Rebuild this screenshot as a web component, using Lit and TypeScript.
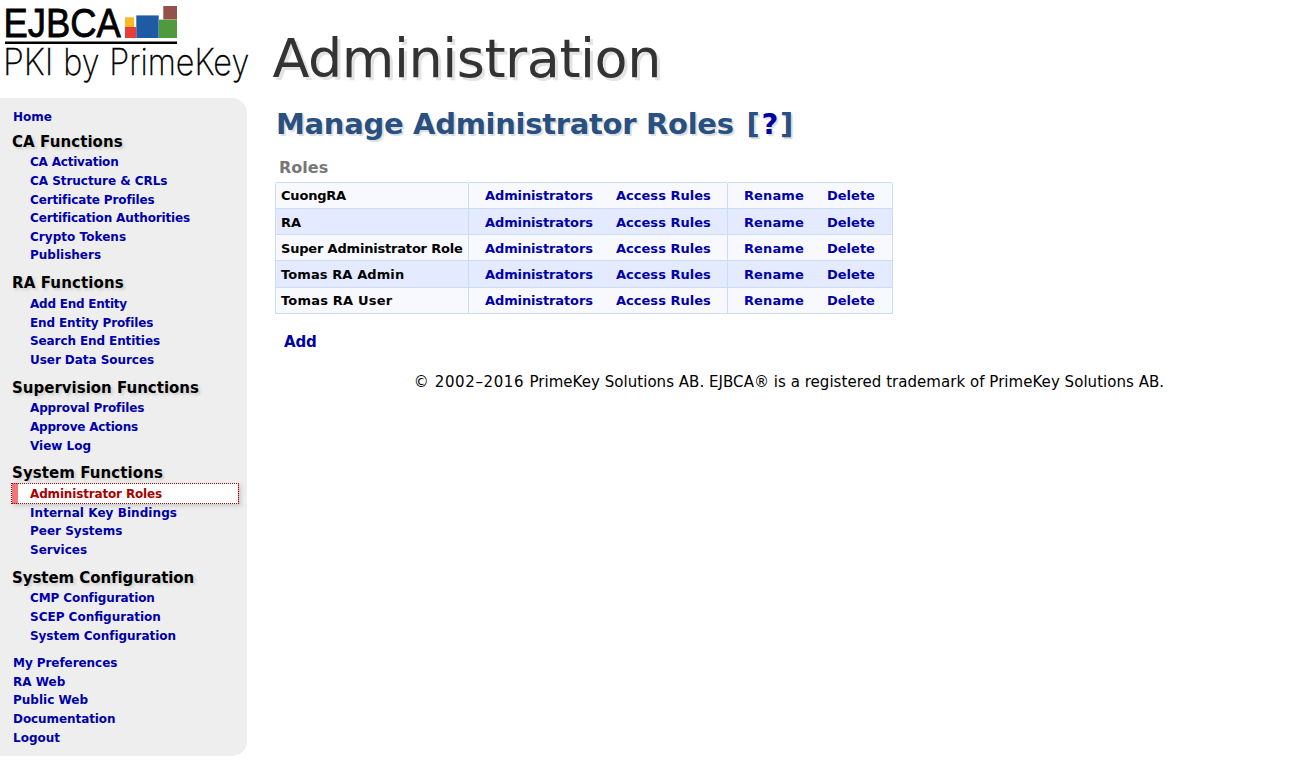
import { LitElement, html, css } from "lit";
import { customElement } from "lit/decorators.js";
import { classMap } from "lit/directives/class-map.js";
import { styleMap } from "lit/directives/style-map.js";

/** A label and its letter tracking in pixels. */
type Label = [text: string, tracking?: number];
interface Section { title: Label; items: Label[]; }

const label = ([text, tracking = 0]: Label) =>
  html`<span style=${styleMap({ letterSpacing: `${tracking}px` })}>${text}</span>`;

const SECTIONS: Section[] = [
  {
    title: ["CA Functions", 0.08],
    items: [["CA Activation", -0.2], ["CA Structure & CRLs", -0.04], ["Certificate Profiles", -0.12], ["Certification Authorities", -0.14], ["Crypto Tokens", 0.04], ["Publishers"]],
  },
  {
    title: ["RA Functions", 0.12],
    items: [["Add End Entity", -0.24], ["End Entity Profiles", -0.12], ["Search End Entities", -0.1], ["User Data Sources", -0.05]],
  },
  {
    title: ["Supervision Functions"],
    items: [["Approval Profiles", -0.14], ["Approve Actions", -0.2], ["View Log"]],
  },
  {
    title: ["System Functions", 0.08],
    items: [["Administrator Roles", -0.16], ["Internal Key Bindings", 0.06], ["Peer Systems"], ["Services"]],
  },
  {
    title: ["System Configuration", -0.07],
    items: [["CMP Configuration", -0.1], ["SCEP Configuration"], ["System Configuration", -0.05]],
  },
];

const FOOT_LINKS: Label[] = [["My Preferences", -0.06], ["RA Web"], ["Public Web"], ["Documentation", -0.08], ["Logout"]];

const ROLES: Label[] = [["CuongRA", -0.2], ["RA"], ["Super Administrator Role", -0.19], ["Tomas RA Admin", 0.1], ["Tomas RA User", 0.2]];

@customElement("ejbca-logo")
export class EjbcaLogo extends LitElement {
  static styles = css`
    :host { display: block; }
    svg { display: block; overflow: visible; }
    .name { font-family: "Liberation Sans", sans-serif; font-size: 40.3px; stroke: #000; stroke-width: 0.8px; }
    .tag { font-family: Inter, sans-serif; font-weight: 200; font-size: 36.5px; stroke: #000; stroke-width: 0.3px; }
  `;
  render() {
    return html`
      <svg width="272" height="98" viewBox="0 0 272 98">
        <text class="name" x="3.4" y="37.2" textLength="117.4" lengthAdjust="spacingAndGlyphs">EJBCA</text>
        <rect x="125" y="17.3" width="9" height="9.7" fill="#fbb829" />
        <rect x="125" y="27" width="11.2" height="11" fill="#e73f37" />
        <rect x="136.3" y="15.4" width="22.4" height="22.6" fill="#1f5ba4" />
        <rect x="159" y="19.6" width="18" height="18.4" fill="#4f9a3c" />
        <rect x="163.3" y="6" width="13.7" height="13.4" fill="#94514a" />
        <rect x="5" y="41.5" width="172" height="2.5" />
        <text class="tag" x="3" y="75.2" textLength="50.5" lengthAdjust="spacingAndGlyphs">PKI</text>
        <text class="tag" x="63.2" y="75.2" textLength="36.2" lengthAdjust="spacingAndGlyphs">by</text>
        <text class="tag" x="109.2" y="75.2" textLength="140" lengthAdjust="spacingAndGlyphs">PrimeKey</text>
      </svg>
    `;
  }
}

@customElement("side-menu")
export class SideMenu extends LitElement {
  static styles = css`
    :host { display: block; }
    .menu { box-sizing: border-box; width: 247px; height: 658px; padding: 9.5px 8px 0 0; background: #eee; border-radius: 0 15px 15px 0; }
    a { display: block; height: 18.64px; line-height: 18.64px; padding-left: 13px; font-size: 12px; font-weight: bold; color: #0000aa; text-decoration: none; white-space: nowrap; }
    .home { margin-bottom: 4.45px; }
    .title { margin: 0; height: 22.7px; line-height: 22px; padding-left: 12px; font-size: 15px; color: #000; text-shadow: 2px 2px 3px #ccc; white-space: nowrap; }
    .items { margin-bottom: 7.2px; }
    .items a { padding-left: 30px; }
    .items .current { box-sizing: border-box; height: 21px; line-height: 21px; margin: -2.1px 0 -0.26px 11px; padding-left: 18px; border: 1px dotted #aa0000; color: #aa0000; background: linear-gradient(90deg, #ee7777 6px, #fff 6px); box-shadow: 2px 2px 4px #ccc; }
    .foot { padding-top: 1.75px; }
  `;
  render() {
    return html`
      <nav class="menu">
        <a class="home">Home</a>
        ${SECTIONS.map((s) => html`
          <h3 class="title">${label(s.title)}</h3>
          <div class="items">
            ${s.items.map((i) => html`<a class=${classMap({ current: i[0] === "Administrator Roles" })}>${label(i)}</a>`)}
          </div>
        `)}
        <div class="foot">${FOOT_LINKS.map((i) => html`<a>${label(i)}</a>`)}</div>
      </nav>
    `;
  }
}

@customElement("roles-table")
export class RolesTable extends LitElement {
  static styles = css`
    :host { display: block; width: 618px; font-size: 13px; font-weight: bold; }
    .rule { display: grid; grid-template-columns: 192px 258px 164px; column-gap: 1px; padding: 0 1px; }
    .rule i { height: 1px; background: #ccddee; }
    .row { display: grid; grid-template-columns: 193px 259px 166px; grid-template-rows: 100%; height: 26px; background: #f8f9ff; }
    .row:nth-child(odd) { background: #e4eaff; }
    .row:nth-child(5) { height: 27px; }
    .cell { box-sizing: border-box; min-height: 0; display: flex; line-height: 25px; border-left: 1px solid #ccddee; border-bottom: 1px solid #ccddee; white-space: nowrap; }
    .cell:last-child { border-right: 1px solid #ccddee; }
    .row:nth-child(3) .cell { line-height: 27px; }
    .row:nth-child(4) .cell { line-height: 28px; }
    .row:nth-child(5) .cell { line-height: 27px; }
    .role { padding-left: 5px; }
    .links { padding-left: 16px; color: #0000aa; }
    .wide { flex: 0 0 131px; }
    .narrow { flex: 0 0 83px; }
  `;
  render() {
    return html`
      <div class="rule"><i></i><i></i><i></i></div>
      ${ROLES.map((r) => html`
        <div class="row">
          <div class="cell role">${label(r)}</div>
          <div class="cell links"><a class="wide">${label(["Administrators", -0.12])}</a><a>${label(["Access Rules", 0.02])}</a></div>
          <div class="cell links"><a class="narrow">${label(["Rename", 0.1])}</a><a>Delete</a></div>
        </div>
      `)}
    `;
  }
}

@customElement("app-root")
export class AppRoot extends LitElement {
  static styles = css`
    :host { display: block; height: 765px; overflow: hidden; background: #fff; color: #000; font-family: "DejaVu Sans", Verdana, sans-serif; }
    .header { display: flex; height: 98px; }
    .header ejbca-logo { flex: 0 0 272.5px; }
    h1 { margin: 27px 0 0; line-height: 64px; height: 64px; font-size: 54px; font-weight: normal; letter-spacing: -0.48px; color: #333; text-shadow: 3px 3px 0 #e3e3e3; }
    .body { display: flex; }
    .body side-menu { flex: 0 0 272px; }
    main { flex: 1; }
    h2 { margin: 9px 0 0 4px; height: 34px; line-height: 34px; font-size: 29px; letter-spacing: -0.3px; color: #285080; text-shadow: 2px 2px 1px #ddd; white-space: nowrap; }
    .help { margin-left: 3px; letter-spacing: 1.8px; }
    .help a { color: #0000aa; }
    h3 { margin: 17px 0 0 7px; height: 20px; line-height: 20px; font-size: 16px; color: #777; }
    roles-table { margin: 4px 0 0 3px; }
    .add { margin: 18px 0 0 12px; height: 20px; line-height: 20px; font-size: 15px; font-weight: bold; letter-spacing: -0.2px; color: #0000aa; }
    footer { margin-top: 20px; padding-right: 2px; line-height: 20px; font-size: 15px; text-align: center; letter-spacing: 0.04px; white-space: nowrap; }
    .years { letter-spacing: 0.6px; }
  `;
  render() {
    return html`
      <div class="header">
        <ejbca-logo></ejbca-logo>
        <h1>Administration</h1>
      </div>
      <div class="body">
        <side-menu></side-menu>
        <main>
          <h2>Manage Administrator Roles <span class="help">[<a>?</a>]</span></h2>
          <h3>Roles</h3>
          <roles-table></roles-table>
          <div class="add">Add</div>
          <footer><span class="years">© 2002–2016 </span>PrimeKey Solutions AB. EJBCA® is a registered trademark of PrimeKey Solutions AB.</footer>
        </main>
      </div>
    `;
  }
}
